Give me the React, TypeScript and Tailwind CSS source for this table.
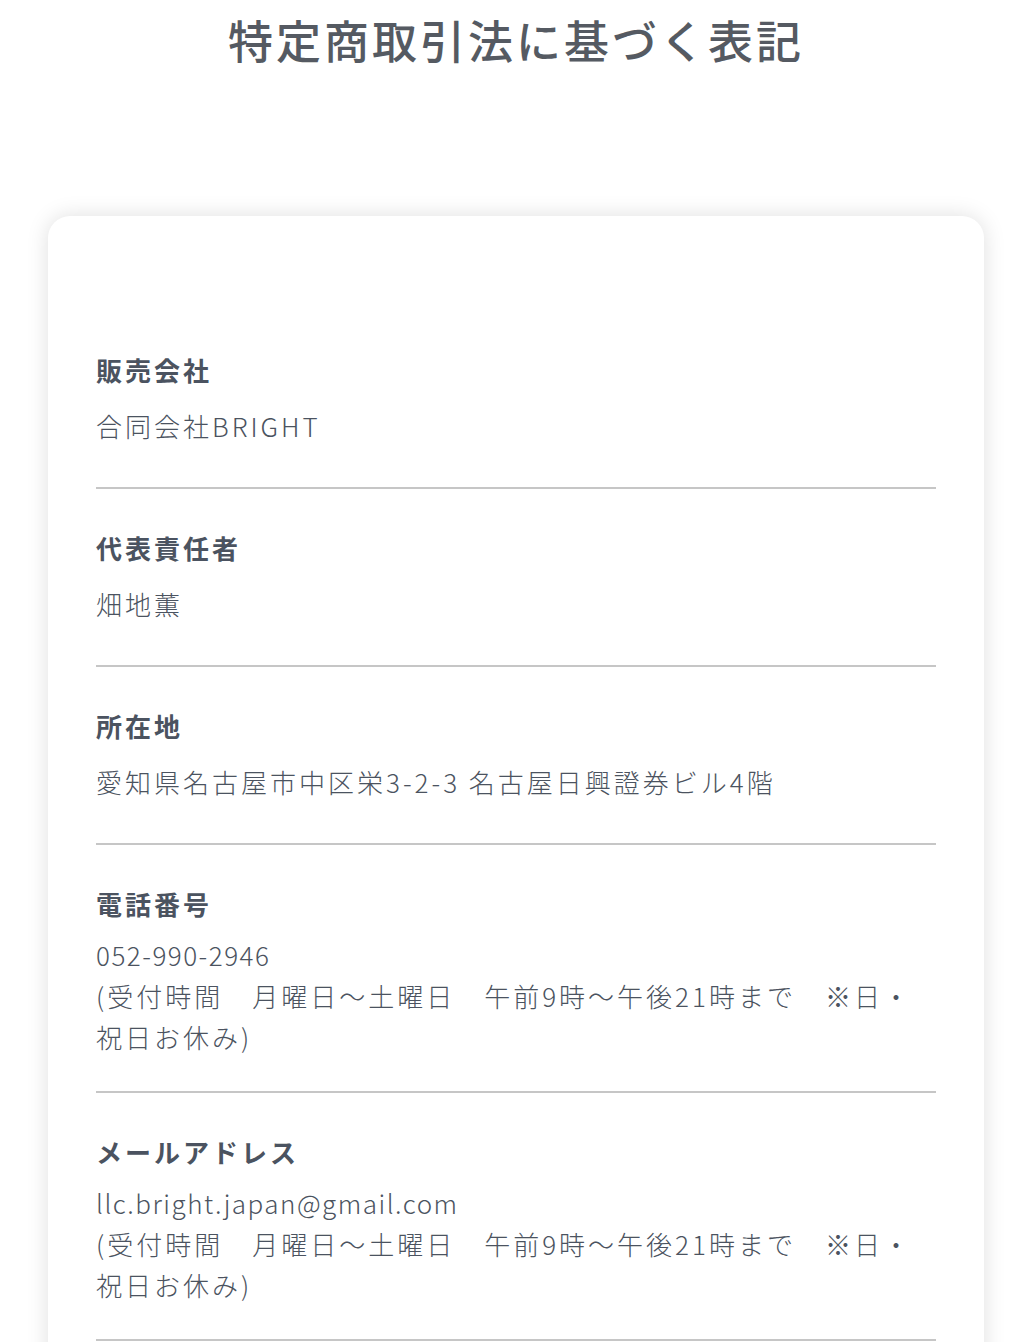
import React from 'react';

type Line = { text: string; latin?: boolean };

type Row = {
  label: string;
  lines: Line[];
  single?: boolean;
};

const hours = '(受付時間　月曜日～土曜日　午前9時～午後21時まで　※日・祝日お休み)';

const rows: Row[] = [
  { label: '販売会社', lines: [{ text: '合同会社BRIGHT' }], single: true },
  { label: '代表責任者', lines: [{ text: '畑地薫' }], single: true },
  { label: '所在地', lines: [{ text: '愛知県名古屋市中区栄3-2-3 名古屋日興證券ビル4階' }], single: true },
  {
    label: '電話番号',
    lines: [{ text: '052-990-2946', latin: true }, { text: hours }],
  },
  {
    label: 'メールアドレス',
    lines: [{ text: 'llc.bright.japan@gmail.com', latin: true }, { text: hours }],
  },
];

const font = "font-['Noto_Sans_CJK_JP','Noto_Sans',sans-serif]";

const App = () => {
  return (
    <div className={`min-h-screen bg-white text-[#4b5360] ${font}`}>
      <h1 className="pt-[11px] text-center text-[45px] leading-[58px] font-medium tracking-[3px] text-[#555a62]">
        特定商取引法に基づく表記
      </h1>

      <div className="mx-[48px] mt-[147px] rounded-[22px] bg-white px-[48px] pt-[95px] shadow-[0_0_22px_rgba(0,0,0,0.13)]">
        {rows.map((row) => (
          <div key={row.label} className="border-b-2 border-[#c6c6c6] pt-[41px] pb-[34px]">
            <div className="text-[26px] leading-[36px] font-bold tracking-[3px]">{row.label}</div>
            <div
              className={`mt-[12px] text-[26px] leading-[41px] font-light tracking-[3px] ${
                row.single ? 'pt-[5px] pb-[7px]' : ''
              }`}
            >
              {row.lines.map((line) => (
                <p key={line.text} className={line.latin ? 'tracking-[1.5px]' : ''}>
                  {line.text}
                </p>
              ))}
            </div>
          </div>
        ))}
        <div className="h-[40px]" />
      </div>
    </div>
  );
};

export default App;
